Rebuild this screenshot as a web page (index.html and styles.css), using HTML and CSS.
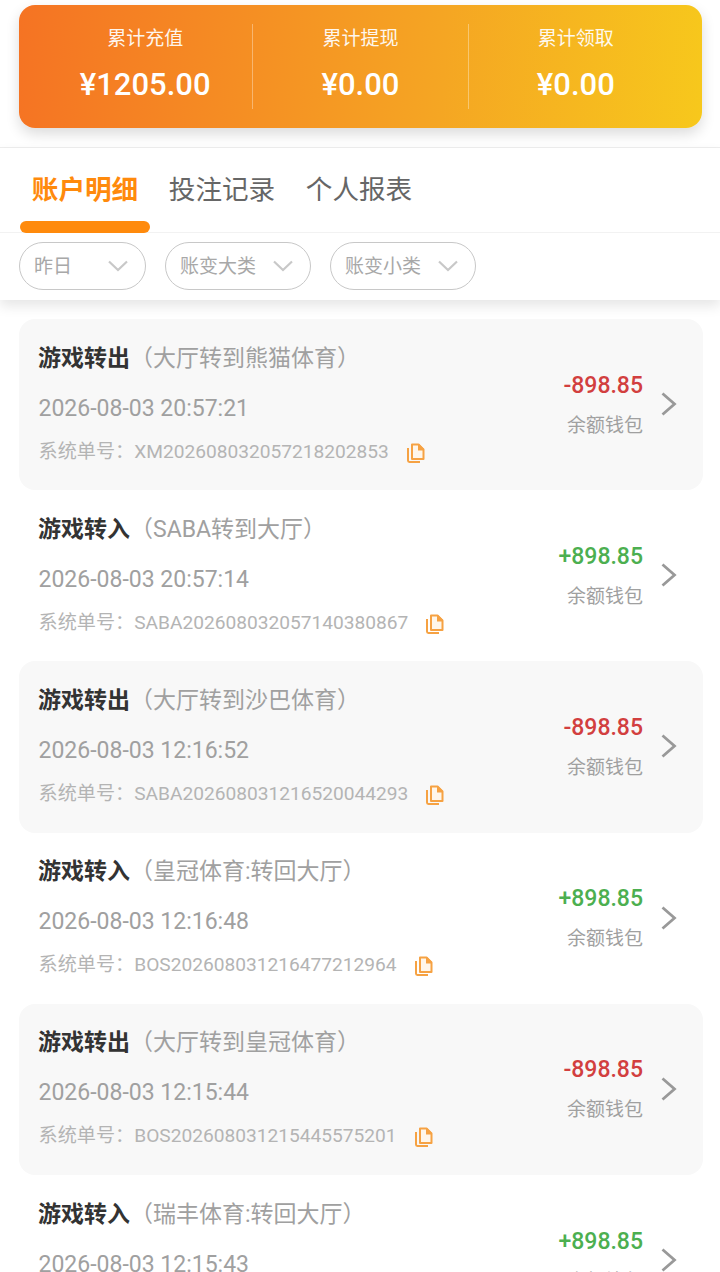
FILE: index.html
```html
<!DOCTYPE html>
<html lang="zh">
<head>
<meta charset="utf-8">
<title>账户明细</title>
<link rel="stylesheet" href="styles.css">
</head>
<body>
<svg class="defs" width="0" height="0" aria-hidden="true">
  <symbol id="copy" viewBox="0 0 20 20">
    <path d="M6 1.500h6.500l5 5V16H6z" fill="#fff6ea" stroke="#f6a243" stroke-width="2" stroke-linejoin="round"/>
    <path d="M12 1h1l5 5v1.500h-6z" fill="#f6a243"/>
    <path d="M2 5v12.600c0 .8.6 1.400 1.400 1.400H14" fill="none" stroke="#f6a243" stroke-width="2"/>
  </symbol>
  <symbol id="chev" viewBox="0 0 18 26">
    <path d="M2.500 2.500 14.500 13 2.500 23.500" fill="none" stroke="#999" stroke-width="2.800"/>
  </symbol>
  <symbol id="down" viewBox="0 0 20 12">
    <path d="M1 1.500 10 10l9-8.500" fill="none" stroke="#c8c8c8" stroke-width="2.200"/>
  </symbol>
</svg>

<section class="top">
  <div class="summary">
    <div class="stat"><div class="stat-label">累计充值</div><div class="stat-value">¥1205.00</div></div>
    <div class="stat"><div class="stat-label">累计提现</div><div class="stat-value">¥0.00</div></div>
    <div class="stat"><div class="stat-label">累计领取</div><div class="stat-value">¥0.00</div></div>
  </div>
</section>

<section class="head">
  <nav class="tabs">
    <a class="tab active">账户明细</a>
    <a class="tab">投注记录</a>
    <a class="tab">个人报表</a>
  </nav>
  <div class="filters">
    <div class="filter f-short"><span>昨日</span><svg class="down"><use href="#down"/></svg></div>
    <div class="filter"><span>账变大类</span><svg class="down"><use href="#down"/></svg></div>
    <div class="filter"><span>账变小类</span><svg class="down"><use href="#down"/></svg></div>
  </div>
</section>

<main class="list">
  <article class="row shaded">
    <div class="info">
      <div class="title"><b>游戏转出</b><span class="paren">（大厅转到熊猫体育）</span></div>
      <div class="date">2026-08-03 20:57:21</div>
      <div class="order"><span>系统单号：XM202608032057218202853</span><svg class="copy"><use href="#copy"/></svg></div>
    </div>
    <div class="money"><div class="amt neg">-898.85</div><div class="wallet">余额钱包</div></div>
    <svg class="chev"><use href="#chev"/></svg>
  </article>
  <article class="row">
    <div class="info">
      <div class="title"><b>游戏转入</b><span class="paren">（SABA转到大厅）</span></div>
      <div class="date">2026-08-03 20:57:14</div>
      <div class="order"><span>系统单号：SABA202608032057140380867</span><svg class="copy"><use href="#copy"/></svg></div>
    </div>
    <div class="money"><div class="amt pos">+898.85</div><div class="wallet">余额钱包</div></div>
    <svg class="chev"><use href="#chev"/></svg>
  </article>
  <article class="row shaded">
    <div class="info">
      <div class="title"><b>游戏转出</b><span class="paren">（大厅转到沙巴体育）</span></div>
      <div class="date">2026-08-03 12:16:52</div>
      <div class="order"><span>系统单号：SABA202608031216520044293</span><svg class="copy"><use href="#copy"/></svg></div>
    </div>
    <div class="money"><div class="amt neg">-898.85</div><div class="wallet">余额钱包</div></div>
    <svg class="chev"><use href="#chev"/></svg>
  </article>
  <article class="row">
    <div class="info">
      <div class="title"><b>游戏转入</b><span class="paren">（皇冠体育:转回大厅）</span></div>
      <div class="date">2026-08-03 12:16:48</div>
      <div class="order"><span>系统单号：BOS202608031216477212964</span><svg class="copy"><use href="#copy"/></svg></div>
    </div>
    <div class="money"><div class="amt pos">+898.85</div><div class="wallet">余额钱包</div></div>
    <svg class="chev"><use href="#chev"/></svg>
  </article>
  <article class="row shaded">
    <div class="info">
      <div class="title"><b>游戏转出</b><span class="paren">（大厅转到皇冠体育）</span></div>
      <div class="date">2026-08-03 12:15:44</div>
      <div class="order"><span>系统单号：BOS202608031215445575201</span><svg class="copy"><use href="#copy"/></svg></div>
    </div>
    <div class="money"><div class="amt neg">-898.85</div><div class="wallet">余额钱包</div></div>
    <svg class="chev"><use href="#chev"/></svg>
  </article>
  <article class="row">
    <div class="info">
      <div class="title"><b>游戏转入</b><span class="paren">（瑞丰体育:转回大厅）</span></div>
      <div class="date">2026-08-03 12:15:43</div>
      <div class="order"></div>
    </div>
    <div class="money"><div class="amt pos">+898.85</div><div class="wallet">余额钱包</div></div>
    <svg class="chev"><use href="#chev"/></svg>
  </article>
</main>
</body>
</html>
```
FILE: styles.css
```css
* { box-sizing: border-box; }
html, body { margin: 0; height: 1272px; overflow: hidden; background: #fff; }
body { font-family: Roboto, "Noto Sans CJK SC", sans-serif; color: #333; }
.defs { position: absolute; }

.top { padding: 5px 18px 19px 19px; border-bottom: 1px solid #eee; height: 148px; }
.summary {
  display: flex; align-items: center; height: 123px; padding: 0 19px; border-radius: 16px;
  background: linear-gradient(95deg, #f57323 0%, #f5a623 62%, #f7c81c 100%);
  box-shadow: 0 6px 14px rgba(0,0,0,.14);
}
.stat { flex: 1; height: 85px; text-align: center; color: #fff; border-right: 1px solid rgba(255,255,255,.35); }
.stat:last-child { border-right: 0; }
.stat-label { font-size: 19px; line-height: 26px; margin-top: 2px; opacity: .92; }
.stat-value { font-size: 31px; font-weight: 500; line-height: 36px; margin-top: 15px; }

.head { height: 152px; box-shadow: 0 6px 12px rgba(0,0,0,.1); position: relative; background: #fff; }
.tabs { display: flex; height: 85px; border-bottom: 1px solid #f2f2f2; padding-left: 20px; }
.tab { position: relative; width: 130px; margin-right: 7px; padding-top: 24px; text-align: center; font-size: 26.600px; line-height: 36px; color: #666; }
.tab.active { color: #ff8a0c; font-weight: 700; }
.tab.active::after { content: ""; position: absolute; left: 0; right: 0; bottom: -1px; height: 12px; border-radius: 6px; background: #ff8a0c; }
.filters { display: flex; gap: 19px; padding: 9px 19px 0; }
.filter { display: flex; align-items: center; justify-content: space-between; width: 146px; height: 48px; padding: 0 17px 3px 14px; border: 1px solid #c8c8c8; border-radius: 24px; font-size: 19px; color: #a8a8a8; }
.filter.f-short { width: 127px; }
.down { width: 20px; height: 12px; margin-top: 3px; }

.list { padding: 19px 17px 0 19px; }
.row { display: flex; align-items: center; height: 171.200px; padding: 0 25px 0 20px; border-radius: 16px; }
.row.shaded { background: #f8f8f8; }
.info { flex: 1; min-width: 0; }
.title { font-size: 23px; line-height: 30px; height: 30px; white-space: nowrap; margin-left: -1px; }
.title b { font-weight: 700; color: #333; }
.paren { color: #a0a0a0; }
.date { font-size: 23px; line-height: 30px; color: #a0a0a0; margin-top: 20px; margin-left: -.5px; }
.order { display: flex; align-items: center; height: 28px; margin-top: 14px; font-size: 19.150px; line-height: 28px; color: #b4b4b4; margin-left: -.5px; }
.copy { width: 20px; height: 20px; margin-left: 17px; margin-top: 2px; }
.money { text-align: right; margin-right: 17px; }
.amt { font-size: 23px; font-weight: 500; line-height: 30px; }
.neg { color: #d23f3f; }
.pos { color: #4caf50; }
.wallet { font-size: 19px; line-height: 26px; color: #a0a0a0; margin-top: 12px; }
.chev { width: 18px; height: 26px; margin-top: -1px; }
```
